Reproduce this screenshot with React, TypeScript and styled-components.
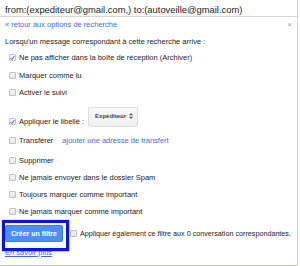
import React from "react";
import styled, { createGlobalStyle } from "styled-components";

const Global = createGlobalStyle`
  html, body { margin: 0; padding: 0; background: #fff; }
  body { font-family: "Liberation Sans", Arial, sans-serif; color: #222; }
`;

const Frame = styled.div`
  position: relative;
  width: 297px;
  height: 265px;
  background: #fff;
  border-right: 1px solid #d4d4d4;
  border-bottom: 1px solid #d2c4a8;
  overflow: hidden;
`;

const SearchBar = styled.div`
  height: 17px;
  box-sizing: border-box;
  padding: 4px 0 0 5px;
  border-bottom: 1px solid #d6d6d6;
  font-size: 9.4px;
  line-height: 11px;
  color: #222;
  white-space: nowrap;
`;

const Close = styled.span`
  position: absolute;
  top: 21px;
  right: 5px;
  font-size: 8px;
  line-height: 8px;
  color: #999;
`;

const Panel = styled.div`
  padding: 3px 0 0 5px;
  font-size: 7.5px;
  line-height: 9px;
`;

const Link = styled.a<{ $underline?: boolean }>`
  color: #3b6fd6;
  text-decoration: ${(p) => (p.$underline ? "underline" : "none")};
  cursor: pointer;
`;

const Intro = styled.div`
  margin-top: 8px;
  height: 9px;
`;

const Row = styled.div<{ $h?: number; $pt?: number }>`
  display: flex;
  align-items: center;
  height: ${(p) => p.$h ?? 17.5}px;
  padding-top: ${(p) => p.$pt ?? 0}px;
  padding-left: 4px;
  box-sizing: border-box;
  white-space: nowrap;
`;

const Options = styled.div`
  margin-top: 3px;
`;

const Box = styled.span`
  display: inline-flex;
  align-items: center;
  justify-content: center;
  width: 7px;
  height: 7px;
  box-sizing: border-box;
  border: 1px solid #c2c2c2;
  background: linear-gradient(#f4f4f4, #e8e8e8);
  border-radius: 1px;
  margin-right: 3px;
  flex-shrink: 0;
`;

const Select = styled.span`
  display: inline-flex;
  align-items: flex-start;
  gap: 3px;
  box-sizing: border-box;
  height: 20px;
  padding: 5px 4px 0 6px;
  margin-left: 4px;
  margin-top: -9px;
  border: 1px solid #dedede;
  border-radius: 2px;
  background: linear-gradient(#f8f8f8, #f0f0f0);
  font-size: 6px;
  line-height: 7px;
  font-weight: bold;
  color: #444;
`;

const ForwardLink = styled(Link)`
  margin-left: 9px;
`;

const Footer = styled.div`
  display: flex;
  align-items: center;
  margin-top: 5px;
  height: 18px;
  white-space: nowrap;
  font-size: 7.2px;
`;

const Button = styled.span`
  display: inline-flex;
  align-items: center;
  justify-content: center;
  width: 58px;
  height: 17px;
  box-sizing: border-box;
  background: #4d8ff7;
  border: 1px solid #3b7de8;
  border-radius: 2px;
  color: #fff;
  font-weight: bold;
  font-size: 7px;
  margin-right: 7px;
`;

const Learn = styled.div`
  margin-top: 5px;
`;

const Highlight = styled.div`
  position: absolute;
  left: 2px;
  top: 220px;
  width: 67px;
  height: 31px;
  box-sizing: border-box;
  border: 3px solid #0b16d9;
  box-shadow: 0 0 1.5px 0.5px rgba(0, 0, 40, 0.7);
`;

const Check = () => (
  <svg width="6" height="6" viewBox="0 0 6 6">
    <path d="M0.8 3.2 L2.3 4.8 L5.3 0.6" fill="none" stroke="#3a4fa0" strokeWidth="1" />
  </svg>
);

const UpDown = () => (
  <svg width="4" height="6" viewBox="0 0 4 6">
    <path d="M2 0 L4 2.3 L0 2.3 Z M0 3.7 L4 3.7 L2 6 Z" fill="#555" />
  </svg>
);

const CheckBox = ({ checked }: { checked?: boolean }) => <Box>{checked && <Check />}</Box>;

export default function App() {
  return (
    <Frame>
      <Global />
      <SearchBar>from:(expediteur@gmail.com,) to:(autoveille@gmail.com)</SearchBar>
      <Close>×</Close>
      <Panel>
        <Link>« retour aux options de recherche</Link>
        <Intro>Lorsqu'un message correspondant à cette recherche arrive :</Intro>
        <Options>
          <Row>
            <CheckBox checked />
            Ne pas afficher dans la boîte de réception (Archiver)
          </Row>
          <Row>
            <CheckBox />
            Marquer comme lu
          </Row>
          <Row>
            <CheckBox />
            Activer le suivi
          </Row>
          <Row $h={28} $pt={12}>
            <CheckBox checked />
            Appliquer le libellé :
            <Select>
              Expéditeur <UpDown />
            </Select>
          </Row>
          <Row $h={22}>
            <CheckBox />
            Transférer
            <ForwardLink>ajouter une adresse de transfert</ForwardLink>
          </Row>
          <Row $h={17}>
            <CheckBox />
            Supprimer
          </Row>
          <Row $h={17}>
            <CheckBox />
            Ne jamais envoyer dans le dossier Spam
          </Row>
          <Row $h={17}>
            <CheckBox />
            Toujours marquer comme important
          </Row>
          <Row $h={17}>
            <CheckBox />
            Ne jamais marquer comme important
          </Row>
        </Options>
        <Footer>
          <Button>Créer un filtre</Button>
          <CheckBox />
          Appliquer également ce filtre aux 0 conversation correspondantes.
        </Footer>
        <Learn>
          <Link $underline>En savoir plus</Link>
        </Learn>
      </Panel>
      <Highlight />
    </Frame>
  );
}
